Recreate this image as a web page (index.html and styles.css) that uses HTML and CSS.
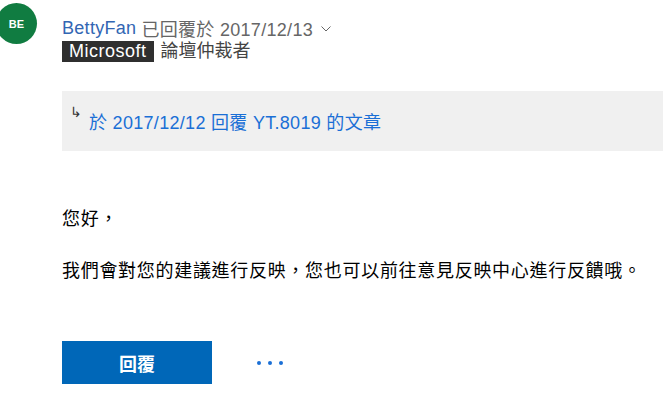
FILE: index.html
```html
<!DOCTYPE html>
<html lang="zh-Hant">
<head>
    <meta charset="UTF-8">
    <title>回覆</title>
    <link rel="stylesheet" href="styles.css">
</head>
<body>
<div class="post">
    <div class="avatar">BE</div>
    <div class="main">
        <div class="byline">
            <a class="author" href="#">BettyFan</a>
            <span class="meta">已回覆於 2017/12/13</span>
            <svg class="chevron" width="10" height="6" viewBox="0 0 10 6">
                <path d="M0.5 0.5 L5 5 L9.5 0.5" fill="none" stroke="#666" stroke-width="1"/>
            </svg>
        </div>
        <div class="role">
            <span class="badge">Microsoft</span>
            <span class="role-name">論壇仲裁者</span>
        </div>

        <div class="quote">
            <span class="quote-arrow">↳</span>
            <a class="quote-link" href="#">於 2017/12/12 回覆 YT.8019 的文章</a>
        </div>

        <div class="body">
            <p>您好，</p>
            <p>我們會對您的建議進行反映，您也可以前往意見反映中心進行反饋哦。</p>
        </div>

        <div class="actions">
            <button class="reply">回覆</button>
            <button class="more"><span></span><span></span><span></span></button>
        </div>
    </div>
</div>
</body>
</html>
```

FILE: styles.css
```css
html {
    font-family: "Liberation Sans", "Noto Sans CJK TC", sans-serif;
}

body {
    margin: 0;
    background: #fff;
    overflow: hidden;
}

.post {
    display: flex;
    padding-top: 3px;
}

.avatar {
    flex: none;
    width: 41px;
    height: 41px;
    margin-left: -4px;
    border-radius: 50%;
    background: #107c41;
    color: #fff;
    font-size: 11px;
    font-weight: bold;
    display: flex;
    align-items: center;
    justify-content: center;
}

.main {
    flex: 1;
    margin-left: 25px;
}

.byline {
    display: flex;
    align-items: center;
    gap: 5px;
    height: 22px;
    margin-top: 14px;
    font-size: 18px;
    letter-spacing: 0.3px;
}

.author {
    color: #3266b3;
    text-decoration: none;
}

.meta {
    color: #666;
}

.chevron {
    margin-left: 3px;
    margin-top: 2px;
}

.role {
    display: flex;
    align-items: center;
    gap: 7px;
    height: 21px;
    margin-top: 2px;
}

.badge {
    background: #2f2f2f;
    color: #fff;
    font-size: 18px;
    padding: 0 7px;
    height: 21px;
    line-height: 21px;
    letter-spacing: 0.5px;
}

.role-name {
    color: #444;
    font-size: 18px;
    line-height: 21px;
}

.quote {
    display: flex;
    align-items: center;
    height: 60px;
    margin-top: 29px;
    padding-left: 8px;
    background: #f0f0f0;
}

.quote-arrow {
    font-size: 14px;
    color: #333;
    margin-top: -18px;
    margin-right: 7px;
}

.quote-link {
    color: #1a6fd6;
    font-size: 18px;
    letter-spacing: 0.3px;
    text-decoration: none;
}

.body {
    margin-top: 55px;
    font-size: 18px;
    color: #000;
    letter-spacing: 0.7px;
}

.body p {
    margin: 0 0 26px;
    line-height: 26px;
}

.actions {
    display: flex;
    align-items: center;
    margin-top: 57px;
}

.reply {
    width: 150px;
    height: 43px;
    border: none;
    background: #0067b8;
    color: #fff;
    font-family: inherit;
    font-size: 18px;
    font-weight: bold;
}

.more {
    display: flex;
    gap: 7px;
    margin-left: 45px;
    padding: 0;
    border: none;
    background: none;
}

.more span {
    width: 4px;
    height: 4px;
    border-radius: 50%;
    background: #1a6fd6;
}
```
